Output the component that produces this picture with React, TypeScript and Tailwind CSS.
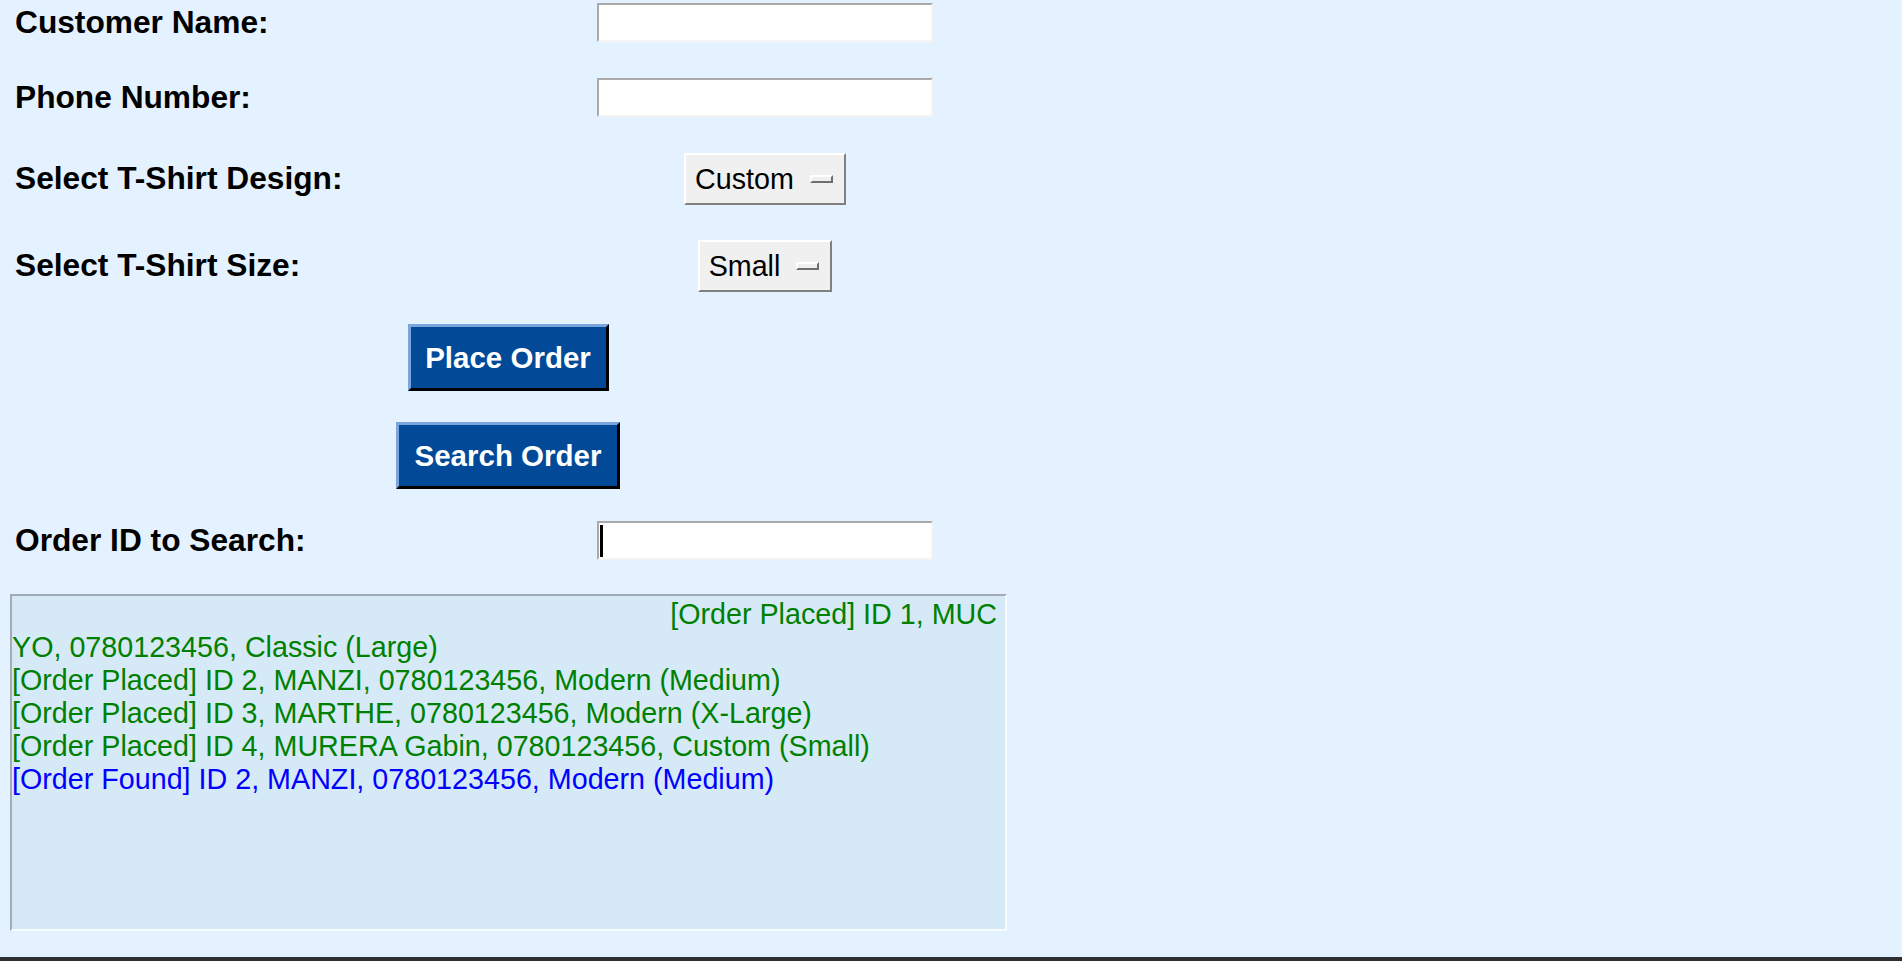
import { useState } from 'react';

const logLines = [
  { text: 'YO, 0780123456, Classic (Large)', color: 'text-[#008000]' },
  { text: '[Order Placed] ID 2, MANZI, 0780123456, Modern (Medium)', color: 'text-[#008000]' },
  { text: '[Order Placed] ID 3, MARTHE, 0780123456, Modern (X-Large)', color: 'text-[#008000]' },
  { text: '[Order Placed] ID 4, MURERA Gabin, 0780123456, Custom (Small)', color: 'text-[#008000]' },
  { text: '[Order Found] ID 2, MANZI, 0780123456, Modern (Medium)', color: 'text-[#0000ff]' },
];

function FieldLabel({ children }: { children: string }) {
  return (
    <div className="w-[597px] pl-[15px] text-[31.7px] font-bold text-black leading-none">
      {children}
    </div>
  );
}

function Entry({ value, onChange, caret }: { value: string; onChange: (v: string) => void; caret?: boolean }) {
  return (
    <div className="relative w-[336px] h-[39px] bg-white border-2 border-t-[#a9a9a9] border-l-[#a9a9a9] border-b-[#f4f4f4] border-r-[#f4f4f4] flex items-center">
      <input
        type="text"
        value={value}
        onChange={(e) => onChange(e.target.value)}
        className="w-full h-full px-[2px] bg-transparent outline-none text-[28.7px] text-black"
      />
      {caret && <span className="absolute left-[1px] top-[2px] w-[3px] h-[32px] bg-black" />}
    </div>
  );
}

function OptionMenu({ value, padLeft }: { value: string; padLeft: string }) {
  return (
    <button
      className={`h-[52px] flex items-center ${padLeft} pr-[11px] bg-[#f0f0f0] border-2 border-t-[#ffffff] border-l-[#ffffff] border-b-[#808080] border-r-[#808080] text-[28.7px] text-black leading-none`}
    >
      <span>{value}</span>
      <span className="ml-[16px] w-[23px] h-[8px] bg-[#f0f0f0] border-2 border-t-[#ffffff] border-l-[#ffffff] border-b-[#6e6e6e] border-r-[#6e6e6e]" />
    </button>
  );
}

function BlueButton({ label, width }: { label: string; width: string }) {
  return (
    <button
      className={`${width} h-[67px] bg-[#024a98] border-[3px] border-t-[#79a5dc] border-l-[#79a5dc] border-b-[#000000] border-r-[#000000] text-white font-bold text-[29.5px] leading-none`}
    >
      {label}
    </button>
  );
}

export default function App() {
  const [name, setName] = useState('');
  const [phone, setPhone] = useState('');
  const [orderId, setOrderId] = useState('');

  return (
    <div className="min-h-screen flex flex-col bg-[#e4f1fe] font-['Liberation_Sans',Arial,sans-serif]">
      <div className="flex-1 flex flex-col">
        <div className="mt-[3px] h-[39px] flex items-center">
          <FieldLabel>Customer Name:</FieldLabel>
          <Entry value={name} onChange={setName} />
        </div>

        <div className="mt-[36px] h-[39px] flex items-center">
          <FieldLabel>Phone Number:</FieldLabel>
          <Entry value={phone} onChange={setPhone} />
        </div>

        <div className="mt-[36px] h-[52px] flex items-center">
          <FieldLabel>Select T-Shirt Design:</FieldLabel>
          <div className="w-[336px] flex justify-center">
            <OptionMenu value="Custom" padLeft="pl-[9px]" />
          </div>
        </div>

        <div className="mt-[35px] h-[52px] flex items-center">
          <FieldLabel>Select T-Shirt Size:</FieldLabel>
          <div className="w-[336px] flex justify-center">
            <OptionMenu value="Small" padLeft="pl-[9px]" />
          </div>
        </div>

        <div className="mt-[32px] w-[1016px] flex justify-center">
          <BlueButton label="Place Order" width="w-[201px]" />
        </div>

        <div className="mt-[31px] w-[1016px] flex justify-center">
          <BlueButton label="Search Order" width="w-[224px]" />
        </div>

        <div className="mt-[32px] h-[39px] flex items-center">
          <FieldLabel>Order ID to Search:</FieldLabel>
          <Entry value={orderId} onChange={setOrderId} caret />
        </div>

        <div className="mt-[34px] ml-[10px] w-[997px] h-[337px] bg-[#d6e9f7] border-2 border-t-[#a3acb6] border-l-[#a3acb6] border-b-[#f6fbff] border-r-[#f6fbff] pt-[2px] pr-[8px] text-[28.7px] leading-[33px]">
          <div className="text-right text-[#008000]">[Order Placed] ID 1, MUC</div>
          {logLines.map((line, i) => (
            <div key={i} className={line.color}>
              {line.text}
            </div>
          ))}
        </div>
      </div>
      <div className="h-[4px] bg-[#2d2f31]" />
    </div>
  );
}
